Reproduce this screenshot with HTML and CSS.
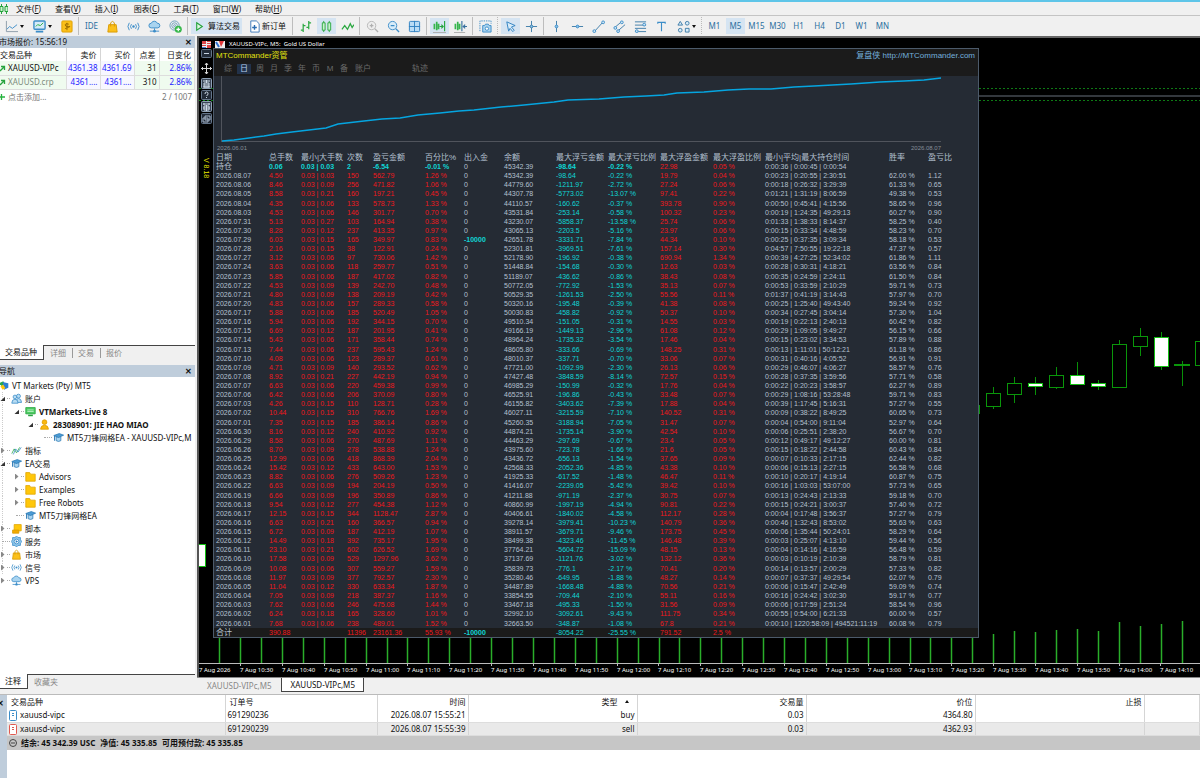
FILE: index.html
```html
<!DOCTYPE html>
<html lang="zh-CN">
<head>
<meta charset="utf-8">
<title>MetaTrader 5</title>
<link rel="stylesheet" href="styles.css">
</head>
<body>
<svg width="0" height="0" class="defs" aria-hidden="true">
  <symbol id="i-cap" viewBox="0 0 14 14"><path d="M4 6v5q3 2 6 0V6z" fill="#a9d4f0" stroke="#2f7cb5"/><path d="M1 4.500 8 2l5.500 2L7 7z" fill="#4a9bd4" stroke="#2f7cb5"/><path d="M2 5v6" stroke="#2f7cb5" stroke-width="1.300"/></symbol>
  <symbol id="i-bag" viewBox="0 0 14 14"><path d="M3 5h8l1 8H2z" fill="#fbc01a" stroke="#d99a00"/><path d="M5 7V3q2-3 4 0v4" fill="none" stroke="#d99a00"/></symbol>
  <symbol id="i-signal" viewBox="0 0 14 14"><circle cx="7" cy="7" r="1.300" fill="#3c8dc8"/><path d="M4.800 4.500q-2 2.500 0 5M9.200 4.500q2 2.500 0 5M2.500 3q-3 4 0 8M11.500 3q3 4 0 8" fill="none" stroke="#3c8dc8"/></symbol>
  <symbol id="i-cloud" viewBox="0 0 14 14"><path d="M3.500 8.500a2.500 2.500 0 0 1 0-5 3.500 3.500 0 0 1 6.500 0 2.500 2.500 0 0 1 .5 5z" fill="#a9d4f0" stroke="#3c8dc8"/><path d="M7 9v3M2 12h10" stroke="#3c8dc8" fill="none"/><circle cx="7" cy="12" r="1.500" fill="#3c8dc8"/></symbol>
  <symbol id="i-folder" viewBox="0 0 14 14"><path d="M1 2h5l1 2h6v9H1z" fill="#ffc70a" stroke="#e0a500"/></symbol>
  <symbol id="i-users" viewBox="0 0 14 14"><g fill="#b8dcf3" stroke="#3c8dc8"><circle cx="9.500" cy="4" r="2.500"/><path d="M6 12q0-5 3.500-5t4 5z"/><circle cx="5" cy="5" r="2.300"/><path d="M1 13q0-5 4-5t4 5z"/></g></symbol>
</svg>
<div class="app">
  <div class="titlestrip"></div>
  <nav class="menubar">
    <svg width="8" height="10" viewBox="0 0 8 10"><path d="M1.500 0v10M6.500 0v10" stroke="#23a33a"/><path d="M0 2.500h3v5H0zM5 2.500h3v5H5z" fill="#cdf3cf" stroke="#23a33a"/></svg>
    <button>文件(<u>F</u>)</button><button>查看(<u>V</u>)</button><button>插入(<u>I</u>)</button><button>图表(<u>C</u>)</button><button>工具(<u>T</u>)</button><button>窗口(<u>W</u>)</button><button>帮助(<u>H</u>)</button>
  </nav>

  <div class="toolbar">
    <button class="tb wide" aria-label="图表"><svg class="ic" viewBox="0 0 14 14"><path d="M1.500 1v11.500H14" fill="none" stroke="#8a9aa8"/><path d="m2 10 3-3 3 2 5-4" fill="none" stroke="#3c8dc8"/></svg><i class="caret"></i></button>
    <button class="tb wide" aria-label="配置"><svg class="ic" viewBox="0 0 14 14"><rect x="1" y="1" width="12" height="9" rx="1" fill="#d5ebf9" stroke="#3c8dc8" stroke-width="1.500"/><path d="m3 7 2-2 3 1 3-3" fill="none" stroke="#27ae3f"/><path d="M3 12.500h8" stroke="#3c8dc8" stroke-width="2"/></svg><i class="caret"></i></button>
    <button class="tb" aria-label="资金"><svg class="ic" viewBox="0 0 14 14"><rect x="2" y="1" width="11" height="12" rx="1" fill="#fbc01a" stroke="#dfa000"/><path d="M9.500 4.500q-4-1.500-4 .8t4 1.700-4 2.300M7.500 3v8" fill="none" stroke="#9a6c00"/></svg></button>
    <i class="sep"></i>
    <button class="tb">IDE</button>
    <button class="tb" aria-label="市场"><svg class="ic"><use href="#i-bag"/></svg></button>
    <button class="tb" aria-label="信号"><svg class="ic"><use href="#i-signal"/></svg></button>
    <button class="tb" aria-label="VPS"><svg class="ic"><use href="#i-cloud"/></svg></button>
    <button class="tb" aria-label="测试"><svg class="ic" viewBox="0 0 14 14"><g fill="none" stroke="#6b9dbb"><circle cx="6" cy="6" r="5"/><circle cx="6" cy="6" r="3"/><circle cx="6" cy="6" r="1"/></g><circle cx="10" cy="10" r="3.800" fill="#37b84b"/><path d="M10 8v4M8 10h4" stroke="#fff" stroke-width="1.300"/></svg></button>
    <i class="sep"></i>
    <button class="tb algo on"><svg class="ic" viewBox="0 0 14 14"><path d="m4 3 6 4-6 4z" fill="#dff6e2" stroke="#23a33a" stroke-width="1.200"/></svg>算法交易</button>
    <button class="tb order"><svg class="ic" viewBox="0 0 14 14"><path d="M3 1h6l3 3v9H3z" fill="#fff" stroke="#3c78b8"/><path d="M7 5.500v5M4.500 8h5" stroke="#2b6cb0" stroke-width="1.500"/></svg>新订单</button>
    <i class="sep"></i>
    <button class="tb" aria-label="柱状图"><svg class="ic" viewBox="0 0 14 14"><path d="M4.500 4v9M2 11h2.500M4.500 6H7M10.500 1v9M8 8h2.500M10.500 3H13" fill="none" stroke="#2aa840" stroke-width="1.300"/></svg></button>
    <button class="tb on" aria-label="蜡烛图"><svg class="ic" viewBox="0 0 14 14"><path d="M4 1v12M10 1v12" stroke="#2aa840"/><path d="M2.500 3h3v8h-3zM8.500 3h3v8h-3z" fill="#c9f2cd" stroke="#2aa840"/></svg></button>
    <button class="tb" aria-label="折线图"><svg class="ic" viewBox="0 0 14 14"><path d="m1 10 3-4 3 4 3-6 2 4 2-3" fill="none" stroke="#2aa840" stroke-width="1.300"/></svg></button>
    <i class="sep"></i>
    <button class="tb" aria-label="放大"><svg class="ic" viewBox="0 0 14 14"><circle cx="6" cy="6" r="4.500" fill="#eee" stroke="#b5b5b5"/><path d="M4 6h4M6 4v4M9.500 9.500l3.500 3.500" stroke="#b0b0b0" stroke-width="1.400"/></svg></button>
    <button class="tb" aria-label="缩小"><svg class="ic" viewBox="0 0 14 14"><circle cx="6" cy="6" r="4.500" fill="#d8ecf9" stroke="#3c8dc8"/><path d="M4 6h4M9.500 9.500l3.500 3.500" stroke="#3c8dc8" stroke-width="1.400"/></svg></button>
    <button class="tb" aria-label="平铺"><svg class="ic" viewBox="0 0 14 14"><rect x="1.500" y="1.500" width="11" height="11" rx="1" fill="#b9dcf5" stroke="#2d7fc0"/><path d="M7 1v12M1 7h12" stroke="#2d7fc0"/></svg></button>
    <i class="sep"></i>
    <button class="tb on" aria-label="自动滚动"><svg class="ic" viewBox="0 0 14 14"><path d="M1.500 4v6M4 2v9M6 4v6" stroke="#36b54c" stroke-width="1.800"/><path d="M12.500 1v11M7 7h4M9 5l2 2-2 2" fill="none" stroke="#24a63c" stroke-width="1.200"/><path d="M0 13.500h14" stroke="#aaa"/></svg></button>
    <button class="tb" aria-label="图表平移"><svg class="ic" viewBox="0 0 14 14"><path d="M1.500 4v6M4 2v9M6 4v6" stroke="#36b54c" stroke-width="1.800"/><path d="M8.500 1v11M14 7h-4M12 5l-2 2 2 2" fill="none" stroke="#356f9d" stroke-width="1.200"/><path d="M0 13.500h12" stroke="#aaa"/></svg></button>
    <i class="sep"></i>
    <button class="tb" aria-label="截图"><svg class="ic" viewBox="0 0 14 14"><path d="M1 12V1h12v3" fill="none" stroke="#3c8dc8" stroke-dasharray="1.500 1"/><path d="M4 6h2l1-1.500h3L11 6h2v7H4z" fill="#a9d4f0" stroke="#3c8dc8"/><circle cx="8.500" cy="9.300" r="1.800" fill="#fff" stroke="#3c8dc8"/></svg></button>
    <i class="sep dots"></i>
    <button class="tb on" aria-label="光标"><svg class="ic" viewBox="0 0 14 14"><path d="m3 2 9 4-4 1.500 3 3.500-1.500 1.500-3-3.500L5 12z" fill="#d8ecf9" stroke="#2d7fc0"/></svg></button>
    <button class="tb" aria-label="十字线"><svg class="ic" viewBox="0 0 14 14"><path d="M7 1v12M1 7h12" stroke="#3c7ba8"/><circle cx="7" cy="7" r="1.500" fill="#8cc4ea" stroke="#3c7ba8"/></svg></button>
    <i class="sep"></i>
    <button class="tb" aria-label="垂直线"><svg class="ic" viewBox="0 0 14 14"><path d="M7 1v12" stroke="#3c7ba8"/><circle cx="7" cy="7" r="1.500" fill="#8cc4ea" stroke="#3c8dc8"/></svg></button>
    <button class="tb" aria-label="水平线"><svg class="ic" viewBox="0 0 14 14"><path d="M1 7h12" stroke="#3c7ba8"/><circle cx="7" cy="7" r="1.500" fill="#8cc4ea" stroke="#3c8dc8"/></svg></button>
    <button class="tb" aria-label="趋势线"><svg class="ic" viewBox="0 0 14 14"><path d="M3 12 12 2" stroke="#3c7ba8"/><g fill="#cfe7f7" stroke="#3c8dc8"><circle cx="2.500" cy="12" r="1.500"/><circle cx="12" cy="2.500" r="1.500"/></g></svg></button>
    <button class="tb" aria-label="通道"><svg class="ic" viewBox="0 0 14 14"><path d="m2 8 7-6M5 12l8-7" stroke="#3c7ba8"/><g fill="#cfe7f7" stroke="#3c8dc8"><circle cx="2.500" cy="8.500" r="1.500"/><circle cx="9.500" cy="2.500" r="1.500"/><circle cx="5.500" cy="12" r="1.500"/></g></svg></button>
    <button class="tb" aria-label="斐波那契"><svg class="ic" viewBox="0 0 14 14"><path d="M1 2h12M1 5.500h12M1 9h12M1 12.500h12" stroke="#3c7ba8"/><g fill="#cfe7f7" stroke="#3c8dc8"><circle cx="11" cy="5" r="1.500"/><circle cx="3" cy="12" r="1.500"/></g></svg></button>
    <button class="tb" aria-label="文字"><svg class="ic" viewBox="0 0 14 14"><path d="M3 4V2.500h8V4M7 2.500V12" fill="none" stroke="#3c8dc8" stroke-width="1.200"/></svg></button>
    <button class="tb wide" aria-label="图形"><svg class="ic" viewBox="0 0 14 14"><g fill="#d8ecf9" stroke="#3c7ba8"><path d="m3.500 1.500 2.500 4H1z"/><circle cx="11" cy="3.500" r="2"/><circle cx="3.500" cy="11" r="2"/><path d="M9 9h4v4H9z"/></g></svg><i class="caret"></i></button>
    <i class="sep dots"></i>
    <button class="tb">M1</button><button class="tb on">M5</button><button class="tb">M15</button><button class="tb">M30</button><button class="tb">H1</button><button class="tb">H4</button><button class="tb">D1</button><button class="tb">W1</button><button class="tb">MN</button>
  </div>

  <div class="workspace">
    <aside class="sidebar">
      <section class="watch">
        <header class="panehead"><span>市场报价: 15:56:19</span><button aria-label="关闭">✕</button></header>
        <div class="pane">
          <table class="quotes">
            <colgroup><col class="q1"><col class="q2"><col class="q2"><col class="q3"><col></colgroup>
            <thead><tr><th>交易品种</th><th>卖价</th><th>买价</th><th>点差</th><th>日变化</th></tr></thead>
            <tbody>
              <tr><td><svg class="up" viewBox="0 0 8 8"><path d="M0 6 4 2M1 1.500h3.500V5" fill="none" stroke="#27a33f" stroke-width="1.300"/></svg>XAUUSD-VIPc</td><td>4361.38</td><td>4361.69</td><td>31</td><td>2.86%</td></tr>
              <tr class="dim"><td><svg class="up" viewBox="0 0 8 8"><path d="M0 6 4 2M1 1.500h3.500V5" fill="none" stroke="#27a33f" stroke-width="1.300"/></svg>XAUUSD.crp</td><td>4361....</td><td>4361....</td><td>310</td><td>2.86%</td></tr>
            </tbody>
          </table>
          <div class="addrow"><span><svg class="up" viewBox="0 0 8 8"><path d="M0 4h5M1.500 1v6" stroke="#27b33f" stroke-width="1.300"/></svg>点击添加...</span><span>2 / 1007</span></div>
        </div>
        <div class="tabs"><button class="on">交易品种</button><button>详细</button><button>交易</button><button>报价</button></div>
      </section>
      <section class="navigator">
        <header class="panehead"><span>导航</span><button aria-label="关闭">✕</button></header>
        <ul class="tree pane">
          <li class="root"><svg class="ti" viewBox="0 0 14 14"><path d="m0 4 6-3 2 4-4 3z" fill="#2aa84a"/><path d="m5 2 8 2v6l-6 3z" fill="#2d7fd0"/><path d="m2 8 4-2 3 5-4 2z" fill="#ffc40a"/></svg>VT Markets (Pty) MT5</li>
          <li class="d1"><i class="tw open"></i><svg class="ti"><use href="#i-users"/></svg>账户</li>
          <li class="d2 strong"><i class="tw open"></i><svg class="ti" viewBox="0 0 14 14"><path d="M1 2h12v8H1z" fill="#4ccb62" stroke="#27a33f"/><path d="M3 5h8M3 7h8" stroke="#c8f5cf"/><path d="M4 12h6" stroke="#27a33f" stroke-width="2"/></svg>VTMarkets-Live 8</li>
          <li class="d3 strong"><i class="tw open"></i><svg class="ti" viewBox="0 0 14 14"><circle cx="7" cy="4" r="3" fill="#fbb90f" stroke="#dd9b00"/><path d="M2 13q0-5 5-5t5 5z" fill="#fbb90f" stroke="#dd9b00"/></svg>28308901: JIE HAO MIAO</li>
          <li class="d4"><i class="tw leaf"></i><svg class="ti"><use href="#i-cap"/></svg>MT5刀锋网格EA - XAUUSD-VIPc,M</li>
          <li class="d1"><i class="tw"></i><svg class="ti" viewBox="0 0 14 14"><path d="m1 11 3-6 3 5 4-7" fill="none" stroke="#2aa84a"/><path d="m3 12 3-7 3 4 4-6" fill="none" stroke="#3c8dc8"/></svg>指标</li>
          <li class="d1"><i class="tw open"></i><svg class="ti"><use href="#i-cap"/></svg>EA交易</li>
          <li class="d2"><i class="tw"></i><svg class="ti"><use href="#i-folder"/></svg>Advisors</li>
          <li class="d2"><i class="tw"></i><svg class="ti"><use href="#i-folder"/></svg>Examples</li>
          <li class="d2"><i class="tw"></i><svg class="ti"><use href="#i-folder"/></svg>Free Robots</li>
          <li class="d2"><i class="tw leaf"></i><svg class="ti"><use href="#i-cap"/></svg>MT5刀锋网格EA</li>
          <li class="d1"><i class="tw"></i><svg class="ti" viewBox="0 0 14 14"><path d="M4 2h9v8H4z" fill="#ffc70a" stroke="#e0a500"/><path d="M2 9h8v4H2z" fill="#f3ab00" stroke="#d99a00"/></svg>脚本</li>
          <li class="d1"><i class="tw leaf"></i><svg class="ti" viewBox="0 0 14 14"><path d="m7 0 2 2 3 0 0 3 2 2-2 2 0 3-3 0-2 2-2-2-3 0 0-3-2-2 2-2 0-3 3 0z" fill="#8cc4ea" stroke="#3c8dc8"/><circle cx="7" cy="7" r="3" fill="#fff" stroke="#3c8dc8"/><path d="m6 5 3 2-3 2z" fill="#2d7fc0"/></svg>服务</li>
          <li class="d1"><i class="tw"></i><svg class="ti"><use href="#i-bag"/></svg>市场</li>
          <li class="d1"><i class="tw"></i><svg class="ti"><use href="#i-signal"/></svg>信号</li>
          <li class="d1"><i class="tw"></i><svg class="ti"><use href="#i-cloud"/></svg>VPS</li>
        </ul>
        <div class="tabs"><button class="on">注释</button><button>收藏夹</button></div>
      </section>
    </aside>

    <main class="charts">
      <div class="chart">
        <svg class="plot" id="plot" width="100%" height="100%"></svg>
        <div class="charttitle">
          <svg width="9" height="7" viewBox="0 0 9 7"><path d="M0 0h9v7H0z" fill="#eee"/><path d="M0 0h4v3H0zM5 0h4v1H5zM5 2h4v1H5zM0 4h4v1H0zM5 4h4v3H5z" fill="#e0484a"/><path d="M0 6h4v1H0z" fill="#4877d0"/></svg>
          <svg width="10" height="7" viewBox="0 0 10 7"><path d="M0 0h10v7H0z" fill="#eee"/><path d="m1 1 3 5" stroke="#2d6fd0" stroke-width="2"/><path d="M4 0h5L6 6z" fill="#e0383a"/></svg>
          <span>XAUUSD-VIPc, M5:&nbsp; Gold US Dollar</span>
        </div>
        <div class="chartbody">
          <div class="rail">
            <svg width="11" height="9" viewBox="0 0 11 9"><rect x=".5" y=".5" width="10" height="8" rx="1" fill="#222b38" stroke="#64758a"/><path d="M3 4.500h5" stroke="#c8d4e2"/></svg>
            <svg width="11" height="13" viewBox="0 0 11 13"><path d="M5.500 1v11M0 6.500h11M4 3l1.500-2L7 3M4 10l1.500 2L7 10M2 5 .5 6.500 2 8M9 5l1.500 1.500L9 8" fill="none" stroke="#d8d8d8"/></svg>
            <svg width="11" height="11" viewBox="0 0 11 11"><rect x=".5" y=".5" width="10" height="10" rx="1" fill="#3a4657" stroke="#8ea0b5"/><path d="M2 3h7M5.500 2v3M3 5h5v4H3zM2 9h7M3 7h5" fill="none" stroke="#cfdbe8"/></svg>
            <svg width="11" height="10" viewBox="0 0 11 10"><rect x=".5" y=".5" width="10" height="9" rx="1" fill="#222b38" stroke="#64758a"/><path d="M4 4q0-2 1.500-2T7 3.500 5.500 6M5.500 7v1" fill="none" stroke="#cfdbe8"/></svg>
            <svg width="11" height="11" viewBox="0 0 11 11"><rect x=".5" y=".5" width="10" height="10" rx="1" fill="#3a4657" stroke="#8ea0b5"/><path d="M2 3h7M3 2v2M8 2v2M3 5h5v4H3zM5.500 4v6M2 7h7" fill="none" stroke="#cfdbe8"/></svg>
            <svg width="11" height="11" viewBox="0 0 11 11"><rect x=".5" y=".5" width="10" height="10" rx="1" fill="#222b38" stroke="#64758a"/><path d="M4 3h5v4H4zM2 5h5v4H2z" fill="#222b38" stroke="#a8b8ca"/></svg>
            <span class="ver">V 8.18</span>
          </div>
          <section class="report">
            <header>
              <div class="brand"><strong>MTCommander资管</strong><a href="#">复盘侠 http://MTCommander.com</a></div>
              <div class="periods"><div class="nine"><button>综</button><button class="on">日</button><button>周</button><button>月</button><button>季</button><button>年</button><button>币</button><button>M</button><button>备</button></div><button class="acc">账户</button><button>轨迹</button></div>
            </header>
            <div class="equity">
              <svg width="100%" height="68">
                <path d="M7.500 0v66M7 65.500h720" stroke="#50545c" fill="none"/>
                <polyline fill="none" stroke="#05a5e0" stroke-width="1.500" points="8,65 20,64 35,62 50,60 62,58 78,56 95,54 112,52 124,48 150,45 168,43 186,42 204,39 226,37 245,35 260,34 287,31 310,29 340,26 354,24 385,23 410,21 432,20 450,19 463,17 490,16 514,14 535,13 557,13 580,11 600,10 637,8 666,6 690,5 710,4 727,2"/>
              </svg>
              <div class="range"><span>2026.06.01</span><span>2026.08.07</span></div>
            </div>
            <table class="stats">
              <colgroup><col class="w53"><col class="w32"><col class="w46"><col class="w26"><col class="w52"><col class="w39"><col class="w40"><col class="w52"><col class="w52"><col class="w52"><col class="w53"><col class="w52"><col class="w124"><col class="w39"><col></colgroup>
              <thead><tr><th>日期</th><th>总手数</th><th>最小|大手数</th><th>次数</th><th>盈亏金额</th><th>百分比%</th><th>出入金</th><th>余额</th><th>最大浮亏金额</th><th>最大浮亏比例</th><th>最大浮盈金额</th><th>最大浮盈比例</th><th>最小|平均|最大持仓时间</th><th>胜率</th><th>盈亏比</th></tr></thead>
              <tbody id="rows">
                <tr class="open"><th>持仓</th><td class="c">0.06</td><td class="c">0.03 | 0.03</td><td class="c">2</td><td class="c">-6.54</td><td class="c">-0.01 %</td><td>0</td><td>45342.39</td><td class="c">-98.64</td><td class="c">-0.22 %</td><td class="r">22.98</td><td class="r">0.05 %</td><td>0:00:36 | 0:00:45 | 0:00:54</td><td></td><td></td></tr>
              </tbody>
              <tfoot><tr><th>合计</th><td class="r">390.88</td><td></td><td class="r">11396</td><td class="r">23161.36</td><td class="r">55.93 %</td><td class="c">-10000</td><td></td><td class="c">-8054.22</td><td class="c">-25.55 %</td><td class="r">791.52</td><td class="r">2.5 %</td><td></td><td></td><td></td></tr></tfoot>
            </table>
          </section>
        </div>
      </div>
      <div class="charttabs"><button>XAUUSD-VIPc,M5</button><button class="on">XAUUSD-VIPc,M5</button></div>
    </main>
  </div>

  <section class="terminal">
    <button class="tclose" aria-label="关闭">✕</button>
    <div class="tmain">
      <table class="trades">
        <colgroup><col class="t1"><col class="t2"><col class="t3"><col class="t4"><col class="t4"><col class="t4"><col class="t4"><col></colgroup>
        <thead><tr><th>交易品种</th><th>订单号</th><th>时间</th><th>类型<i class="sort"></i></th><th>交易量</th><th>价位</th><th>止损</th><th></th></tr></thead>
        <tbody>
          <tr><td><svg class="doc" viewBox="0 0 8 11"><rect x=".5" y=".5" width="7" height="10" rx="1" fill="#fff" stroke="#3c8dc8"/><path d="M3 3.500h2M3 5.500h2" stroke="#3c8dc8"/></svg>xauusd-vipc</td><td>691290236</td><td>2026.08.07 15:55:21</td><td>buy</td><td>0.03</td><td>4364.80</td><td></td><td></td></tr>
          <tr><td><svg class="doc" viewBox="0 0 8 11"><rect x=".5" y=".5" width="7" height="10" rx="1" fill="#fff" stroke="#e05a50"/><path d="M3 3.500h2M3 5.500h2" stroke="#e05a50"/></svg>xauusd-vipc</td><td>691290239</td><td>2026.08.07 15:55:39</td><td>sell</td><td>0.03</td><td>4362.93</td><td></td><td></td></tr>
        </tbody>
      </table>
      <div class="balance"><svg width="8" height="8" viewBox="0 0 8 8"><circle cx="4" cy="4" r="3.500" fill="none" stroke="#444"/><path d="M2 4h4" stroke="#444"/></svg><span>结余: 45 342.39 USC</span><span>净值: 45 335.85</span><span>可用预付款: 45 335.85</span></div>
    </div>
  </section>
</div>
<script src="app.js"></script>
</body>
</html>
```
FILE: styles.css
```css
* { box-sizing: border-box; }
body { margin: 0; background: #f0f0f0; color: #111; font: 8px/12px "Noto Sans", "Noto Sans CJK SC", sans-serif; }
button { border: 0; background: none; padding: 0; margin: 0; font: inherit; color: inherit; white-space: nowrap; }
table { border-collapse: collapse; border-spacing: 0; table-layout: fixed; width: 100%; }
th, td { padding: 0; font-weight: inherit; text-align: left; white-space: nowrap; }
.defs { position: absolute; }
.app { min-height: 100vh; display: flex; flex-direction: column; overflow: hidden; }

.titlestrip { height: 2px; background: #5ec5e8; }
.menubar { display: flex; align-items: center; gap: 14px; height: 14px; border-bottom: 1px solid #c4c4c4; }
.menubar svg { margin-right: -6px; }
.menubar button { min-width: 25px; text-align: left; }

.toolbar { display: flex; align-items: center; height: 20px; color: #2b6f9e; }
.tb { width: 21px; height: 18px; display: flex; align-items: center; justify-content: center; flex: none; border: 1px solid transparent; }
.tb.wide { width: 28px; gap: 2px; }
.tb.on { background: #d5e4f2; background-clip: padding-box; }
.tb.algo { width: 53px; color: #111; gap: 2px; }
.tb.order { width: 48px; color: #111; gap: 1px; }
.ic { width: 13px; height: 13px; flex: none; }
.caret { border: 2px solid transparent; border-top: 3px solid #111; border-bottom: 0; }
.sep { width: 4px; height: 18px; flex: none; background: linear-gradient(#bdbdbd, #bdbdbd) 1px 0 / 1px 100% no-repeat; }
.sep.dots { background: repeating-linear-gradient(#bbb 0 1px, transparent 1px 2px) 1px 0 / 1px 100% no-repeat; }

.workspace { flex: 1; display: flex; min-height: 0; }
.sidebar { width: 197px; flex: none; display: flex; flex-direction: column; padding-right: 2px; }
.panehead { display: flex; justify-content: space-between; align-items: center; height: 12px; padding-right: 3px; background: #bfcddb; }
.panehead span { text-indent: -1px; }
.panehead button { width: 8px; color: #111; font-weight: bold; }
.pane { flex: 1; background: #fff; overflow: hidden; }
.watch { display: flex; flex-direction: column; height: 324px; }
.navigator { flex: 1; display: flex; flex-direction: column; padding: 5px 0 5px; }
.q1 { width: 66px; } .q2 { width: 34px; } .q3 { width: 25px; }
.quotes th { height: 13px; border-right: 1px solid #d5d5d5; text-align: right; padding-right: 3px; }
.quotes td { height: 14px; border-right: 1px solid #ddd; border-bottom: 1px solid #ddd; text-align: right; padding-right: 2px; background: #effbef; }
.quotes th:first-child, .quotes td:first-child { text-align: left; padding: 0; }
.quotes td:nth-child(2), .quotes td:nth-child(3) { background: #f7f7ff; color: #1a1aff; }
.quotes td:nth-child(5) { color: #1a1aff; }
.quotes .dim td:first-child { color: #7d8c7d; }
.up { width: 8px; height: 8px; vertical-align: middle; }
.addrow { display: flex; justify-content: space-between; height: 14px; align-items: center; padding-right: 3px; color: #777; }
.tabs { display: flex; height: 15px; border-top: 1px solid #444; color: #888; background: #f0f0f0; }
.tabs button { padding: 0 6px; }
.tabs button + button:not(:nth-child(2)) { background: linear-gradient(#999, #999) 0 2px / 1px 10px no-repeat; }
.tabs .on { padding: 0 6px 0 5px; margin-top: -1px; background: #fff; color: #111; border-right: 1px solid #444; border-bottom: 1px solid #444; }

.tree { margin: 0; padding: 2px 0 0; list-style: none; }
.tree li { display: flex; align-items: center; height: 13px; white-space: nowrap; background: repeating-linear-gradient(#ccc 0 1px, #fff 1px 2px) 2px 0 / 1px 100% no-repeat; }
.tree li.root, .tree li:last-child { background: none; }
.tree .root .ti { margin: 0 3px 0 -1px; width: 10px; }
.tree .strong { font-weight: bold; }
.d2 { padding-left: 14px; } .d3 { padding-left: 28px; } .d4 { padding-left: 42px; }
.ti { width: 11px; height: 11px; flex: none; margin-right: 3px; }
.tw { width: 11px; height: 7px; flex: none; display: flex; align-items: center; }
.tw::before { content: ""; width: 5px; height: 6px; background: #888; clip-path: polygon(20% 0, 90% 50%, 20% 100%); }
.tw::after { content: ""; width: 3px; margin-left: 2px; border-top: 1px dotted #aaa; }
.tw.open::before { background: #333; clip-path: polygon(100% 20%, 100% 90%, 10% 90%); }
.tw.leaf::before { width: 2px; background: none; clip-path: none; }
.tw.leaf::after { width: 8px; margin: 0; }

.charts { flex: 1; min-width: 0; display: flex; flex-direction: column; }
.chart { flex: 1; position: relative; overflow: hidden; background: #000; border-left: 2px solid #555; border-top: 2px solid #666; }
.plot { position: absolute; inset: 0; }
.plot text { fill: #fff; font-size: 6px; }
.charttitle { position: relative; display: flex; align-items: center; gap: 4px; height: 10px; padding: 2px 0 0 3px; color: #fff; font-size: 6px; line-height: 8px; }
.chartbody { position: relative; display: flex; }
.rail { width: 14px; display: flex; flex-direction: column; align-items: center; gap: 1px; padding-top: 1px; }
.rail svg { flex: none; }
.rail svg:nth-child(2) { margin: 3px 0 2px; }
.ver { writing-mode: vertical-rl; margin-top: 33px; color: #e8e800; font: 7px/8px "Liberation Sans", sans-serif; }

.report { width: 766px; border: 1px solid #4c5a6a; background: #252b34; color: #b4c0d0; font-family: "Liberation Sans", "Noto Sans CJK SC", sans-serif; }
.report header { background: #1b1b1b; height: 27px; display: flex; flex-direction: column; }
.brand { display: flex; justify-content: space-between; height: 13px; padding: 1px 3px 0 2px; }
.brand strong { color: #e2e210; font-weight: normal; }
.brand a { color: #74b0dc; text-decoration: none; }
.periods { display: flex; align-items: center; height: 14px; padding-left: 7px; color: #6a6a6a; }
.nine { width: 130px; display: flex; }
.nine button { flex: 1; line-height: 10px; }
.nine .on { background: #22324a; background-clip: content-box; padding: 0 2px; color: #b9d0ec; }
.acc { margin: 0 41px 0 4px; }
.range { display: flex; justify-content: space-between; width: 727px; height: 9px; padding-left: 3px; font-size: 6px; line-height: 8px; color: #858e99; }
.equity svg { display: block; }
.stats { height: 484px; font-size: 7px; line-height: 9px; }
.stats th { font-size: 8px; }
.stats th, .stats td { height: 9px; padding-left: 2px; }
.stats .r { color: #f0181c; }
.stats .c { color: #10d6d6; }
.stats .open .c, .stats td.c:nth-child(7) { font-weight: bold; }
.stats tfoot { background: #1b1b1b; }
.w26 { width: 26px; } .w32 { width: 32px; } .w39 { width: 39px; } .w40 { width: 40px; } .w46 { width: 46px; } .w52 { width: 52px; } .w53 { width: 53px; } .w124 { width: 124px; }

.charttabs { display: flex; height: 17px; padding-left: 2px; border-top: 1px solid #888; color: #888; }
.charttabs button { height: 15px; padding: 0 8px; }
.charttabs .on { min-width: 81px; height: 14px; margin-left: 2px; background: #fff; color: #111; border: 1px solid #444; border-top: 0; }

.terminal { display: flex; height: 84px; border-top: 1px solid #bbb; background: #fff; }
.tclose { width: 7px; background: #bfcddb; display: flex; align-items: flex-start; padding-top: 2px; color: #111; font-weight: bold; text-indent: -3px; overflow: hidden; }
.tmain { flex: 1; min-width: 0; }
.t1 { width: 218px; } .t2 { width: 152px; } .t3 { width: 91px; } .t4 { width: 169px; }
.trades th { height: 14px; }
.trades td { height: 13px; border-bottom: 1px solid #ddd; }
.trades th, .trades td { padding: 0 2px; text-align: right; border-right: 1px solid #d5d5d5; }
.trades th:first-child, .trades th:nth-child(2) { text-align: left; padding-left: 4px; }
.trades td:first-child, .trades td:nth-child(2) { text-align: left; }
.trades tbody tr:nth-child(2) { background: #e9e9e9; }
.doc { width: 8px; height: 11px; margin-right: 3px; vertical-align: middle; }
.sort { display: inline-block; margin: 0 6px 2px 7px; border: 2px solid transparent; border-bottom: 3px solid #111; border-top: 0; }
.balance { display: flex; align-items: center; gap: 5px; height: 14px; padding-left: 2px; background: #c6c6c6; font-weight: bold; }
.balance svg { margin-right: -1px; }
```
FILE: app.js
```js
// date, lots, max lot, trades, profit, %, in/out, balance, float loss, %, float profit, %, hold times, win rate, ratio
const days = `
08.07 4.50 0.03 150 562.79 1.26 0 45342.39 -98.64 -0.22 19.79 0.04 0:00:23|0:20:55|2:30:51 62.00 1.12
08.06 8.46 0.09 256 471.82 1.06 0 44779.60 -1211.97 -2.72 27.24 0.06 0:00:18|0:26:32|3:29:39 61.33 0.65
08.05 8.58 0.21 160 197.21 0.45 0 44307.78 -5773.02 -13.07 97.41 0.22 0:01:21|1:31:19|8:06:59 49.38 0.53
08.04 4.35 0.06 133 578.73 1.33 0 44110.57 -160.62 -0.37 393.78 0.90 0:00:50|0:45:41|4:15:56 58.65 0.96
08.03 4.53 0.06 146 301.77 0.70 0 43531.84 -253.14 -0.58 100.32 0.23 0:00:19|1:24:35|49:29:13 60.27 0.90
07.31 5.13 0.27 103 164.94 0.38 0 43230.07 -5858.37 -13.58 25.74 0.06 0:01:33|1:38:33|8:14:37 58.25 0.40
07.30 8.28 0.12 237 413.35 0.97 0 43065.13 -2203.5 -5.16 23.97 0.06 0:00:15|0:33:34|4:48:59 58.23 0.70
07.29 6.03 0.15 165 349.97 0.83 -10000 42651.78 -3331.71 -7.84 44.34 0.10 0:00:25|0:37:35|3:09:34 58.18 0.53
07.28 2.16 0.15 38 122.91 0.24 0 52301.81 -3969.51 -7.61 157.14 0.30 0:04:57|7:50:55|19:22:18 47.37 0.57
07.27 3.12 0.06 97 730.06 1.42 0 52178.90 -196.92 -0.38 690.94 1.34 0:00:39|4:27:25|52:34:02 61.86 1.11
07.24 3.63 0.06 118 259.77 0.51 0 51448.84 -154.68 -0.30 12.63 0.03 0:00:28|0:30:31|4:18:21 63.56 0.84
07.23 5.85 0.06 187 417.02 0.82 0 51189.07 -436.62 -0.86 38.43 0.08 0:00:35|0:24:59|2:24:11 61.50 0.84
07.22 4.53 0.09 139 242.70 0.48 0 50772.05 -772.92 -1.53 35.13 0.07 0:00:53|0:33:59|2:10:29 59.71 0.73
07.21 4.80 0.09 138 209.19 0.42 0 50529.35 -1261.53 -2.50 55.56 0.11 0:01:37|0:41:19|3:14:43 57.97 0.70
07.20 4.83 0.06 157 289.33 0.58 0 50320.16 -195.48 -0.39 41.38 0.08 0:00:25|1:25:40|49:43:40 59.24 0.92
07.17 5.88 0.06 185 520.49 1.05 0 50030.83 -458.82 -0.92 50.37 0.10 0:00:34|0:27:45|3:04:14 57.30 1.04
07.16 5.94 0.06 192 344.15 0.70 0 49510.34 -151.05 -0.31 14.55 0.03 0:00:19|0:22:13|2:40:13 60.42 0.82
07.15 6.69 0.12 187 201.95 0.41 0 49166.19 -1449.13 -2.96 61.08 0.12 0:00:29|1:09:05|9:49:27 56.15 0.66
07.14 5.43 0.06 171 358.44 0.74 0 48964.24 -1735.32 -3.54 17.46 0.04 0:00:15|0:23:02|3:34:53 57.89 0.88
07.13 7.44 0.06 237 595.43 1.24 0 48605.80 -333.66 -0.69 148.25 0.31 0:00:13|1:11:01|50:12:21 61.18 0.86
07.10 4.08 0.06 123 289.37 0.61 0 48010.37 -337.71 -0.70 33.06 0.07 0:00:31|0:40:16|4:05:52 56.91 0.91
07.09 4.71 0.09 140 293.52 0.62 0 47721.00 -1092.99 -2.30 26.13 0.06 0:00:29|0:46:07|4:06:27 58.57 0.76
07.08 8.92 0.21 227 442.19 0.94 0 47427.48 -3848.59 -8.14 72.57 0.15 0:00:28|0:37:35|3:59:56 57.71 0.58
07.07 6.63 0.06 220 459.38 0.99 0 46985.29 -150.99 -0.32 17.76 0.04 0:00:22|0:20:23|3:58:57 62.27 0.89
07.06 6.42 0.06 206 370.09 0.80 0 46525.91 -196.86 -0.43 33.48 0.07 0:00:29|1:08:16|53:28:48 59.71 0.83
07.03 4.26 0.15 110 128.71 0.28 0 46155.82 -3403.62 -7.39 17.88 0.04 0:00:39|1:17:45|5:16:31 57.27 0.55
07.02 10.44 0.15 310 766.76 1.69 0 46027.11 -3215.59 -7.10 140.52 0.31 0:00:09|0:38:22|8:49:25 60.65 0.73
07.01 7.35 0.15 185 386.14 0.86 0 45260.35 -3188.94 -7.05 31.47 0.07 0:00:04|0:54:00|9:11:04 52.97 0.64
06.30 8.16 0.12 240 410.92 0.92 0 44874.21 -1735.14 -3.90 42.54 0.10 0:00:06|0:25:51|2:38:20 56.67 0.70
06.29 8.58 0.06 270 487.69 1.11 0 44463.29 -297.69 -0.67 23.4 0.05 0:00:12|0:49:17|49:12:27 60.00 0.81
06.26 8.70 0.09 278 538.88 1.24 0 43975.60 -723.78 -1.66 21.6 0.05 0:00:15|0:18:22|2:44:58 60.43 0.84
06.25 12.99 0.06 418 868.39 2.04 0 43436.72 -656.13 -1.54 37.65 0.09 0:00:07|0:10:33|2:17:15 62.44 0.82
06.24 15.42 0.12 433 643.00 1.53 0 42568.33 -2052.36 -4.85 43.38 0.10 0:00:06|0:15:13|2:27:15 56.58 0.68
06.23 8.82 0.06 276 509.26 1.23 0 41925.33 -617.52 -1.48 46.47 0.11 0:00:10|0:20:17|4:19:14 60.87 0.75
06.22 6.63 0.09 194 204.19 0.50 0 41416.07 -2239.05 -5.42 39.42 0.10 0:00:16|1:03:03|53:07:00 57.73 0.65
06.19 6.66 0.09 196 350.89 0.86 0 41211.88 -971.19 -2.37 30.75 0.07 0:00:13|0:24:43|2:13:33 59.18 0.70
06.18 9.54 0.12 277 454.38 1.12 0 40860.99 -1997.19 -4.94 90.81 0.22 0:00:15|0:24:21|3:00:37 57.40 0.72
06.17 12.15 0.15 344 1128.47 2.87 0 40406.61 -1840.02 -4.58 112.17 0.28 0:00:04|0:17:48|3:56:37 57.27 0.79
06.16 6.63 0.21 160 366.57 0.94 0 39278.14 -3979.41 -10.23 140.79 0.36 0:00:46|1:32:43|8:53:02 55.63 0.63
06.15 6.72 0.09 187 412.19 1.07 0 38911.57 -3679.71 -9.46 173.75 0.45 0:00:06|1:35:44|50:24:01 58.29 0.64
06.12 14.49 0.18 392 735.17 1.95 0 38499.38 -4323.46 -11.45 146.48 0.39 0:00:03|0:25:07|4:13:10 59.44 0.56
06.11 23.10 0.21 602 626.52 1.69 0 37764.21 -5604.72 -15.09 48.15 0.13 0:00:04|0:14:16|4:16:59 56.48 0.59
06.10 17.58 0.09 529 1297.96 3.62 0 37137.69 -1121.76 -3.02 132.12 0.36 0:00:03|0:10:19|2:10:39 58.79 0.81
06.09 10.08 0.06 307 559.27 1.59 0 35839.73 -776.1 -2.17 70.41 0.20 0:00:14|0:13:57|2:00:29 57.33 0.82
06.08 11.97 0.09 377 792.57 2.30 0 35280.46 -649.95 -1.88 48.27 0.14 0:00:07|0:37:37|49:29:54 62.07 0.79
06.05 11.04 0.12 330 633.34 1.87 0 34487.89 -1668.48 -4.88 70.56 0.21 0:00:06|0:15:47|2:42:49 59.09 0.74
06.04 7.05 0.09 218 387.37 1.16 0 33854.55 -709.44 -2.10 55.11 0.16 0:00:16|0:24:42|3:02:30 59.17 0.77
06.03 7.62 0.06 246 475.08 1.44 0 33467.18 -495.33 -1.50 31.56 0.09 0:00:06|0:17:59|2:51:24 58.54 0.96
06.02 6.24 0.18 165 328.60 1.01 0 32992.10 -3092.61 -9.43 111.75 0.34 0:00:55|0:54:00|6:21:33 60.00 0.57
06.01 7.68 0.06 238 489.01 1.52 0 32663.50 -348.87 -1.08 67.8 0.21 0:00:10|1220:58:09|494521:11:19 60.08 0.79`;

const tone = ['', 'r', 'r', 'r', 'r', 'r', '', '', 'c', 'c', 'r', 'r', '', '', ''];
const percent = [5, 9, 11, 13];
document.getElementById('rows').insertAdjacentHTML('beforeend', days.trim().split('\n').map(line => {
  const v = line.split(' ');
  v[0] = '2026.' + v[0];
  v[2] = '0.03 | ' + v[2];
  v[12] = v[12].replace(/\|/g, ' | ');
  percent.forEach(i => { v[i] += ' %'; });
  return '<tr>' + v.map((t, i) => `<td class="${i === 6 && t !== '0' ? 'c' : tone[i]}">${t}</td>`).join('') + '</tr>';
}).join(''));

// Price chart: bid/ask lines, candles, volume bars and time axis
const line = (x1, y1, x2, y2, c, extra = '') => `<path d="M${x1} ${y1}L${x2} ${y2}" stroke="${c}" ${extra}/>`;
let g = line(0, 50.5, 3000, 50.5, '#0d7a14', 'stroke-dasharray="2 2"')
  + line(0, 62.5, 3000, 62.5, '#0d7a14', 'stroke-dasharray="2 2"')
  + line(780, 58, 3000, 58, '#34383e', 'stroke-width="2"');

// left, right, top, bottom, wick top, wick bottom, falling
const candles = [
  [774, 781, 367, 375, 367, 375, 0], [787, 802, 355, 368, 349, 371, 0], [808, 823, 345, 356, 339, 365, 0],
  [829, 844, 345, 348, 339, 357, 1], [850, 865, 337, 349, 329, 351, 0], [871, 886, 337, 346, 324, 347, 1],
  [892, 907, 345, 348, 342, 352, 1], [913, 928, 306, 349, 302, 350, 0], [934, 949, 298, 308, 290, 318, 0],
  [955, 970, 299, 328, 294, 332, 1], [975, 991, 326, 327, 323, 348, 0], [996, 1011, 303, 327, 303, 327, 0],
  [-8, 7, 506, 528, 506, 528, 1]
];
candles.forEach(([l, r, t, b, wt, wb, down]) => {
  const x = Math.floor((l + r) / 2) + 0.5;
  g += line(x, wt, x, wb, '#089008')
    + `<rect x="${l + 0.5}" y="${t + 0.5}" width="${r - l - 1}" height="${b - t}" fill="${down ? '#fff' : '#000'}" stroke="${down ? '#12c012' : '#0a960a'}"/>`;
});

const tops = { 37: 596, 38: 593, 39: 594, 40: 592, 41: 591, 42: 593, 43: 584, 44: 588, 45: 586, 46: 583 };
for (let i = 0; i < 47; i++) {
  const x = Math.floor(20.7 + i * 20.92) + 0.5;
  g += line(x, tops[i] || 590, x, 625, '#2aae2a', 'stroke-width="1.5"');
}
g += line(0, 625.5, 3000, 625.5, '#bbb') + '<text x="0" y="634">7 Aug 2026</text>';
for (let k = 0; k < 23; k++) {
  const x = Math.round(41 + k * 41.84);
  const m = 630 + k * 10;
  g += line(x + 0.5, 625, x + 0.5, 628, '#bbb')
    + `<text x="${x}" y="634">7 Aug ${Math.floor(m / 60)}:${String(m % 60).padStart(2, '0')}</text>`;
}
document.getElementById('plot').innerHTML = g;
```
